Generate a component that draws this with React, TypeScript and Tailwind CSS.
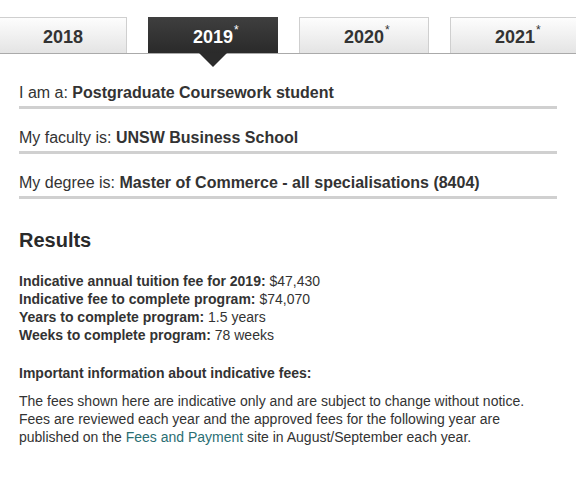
const tabs = [
  { year: '2018', star: false, active: false },
  { year: '2019', star: true, active: true },
  { year: '2020', star: true, active: false },
  { year: '2021', star: true, active: false },
];

const choices = [
  { label: 'I am a:', value: 'Postgraduate Coursework student' },
  { label: 'My faculty is:', value: 'UNSW Business School' },
  { label: 'My degree is:', value: 'Master of Commerce - all specialisations (8404)' },
];

const results = [
  { label: 'Indicative annual tuition fee for 2019:', value: '$47,430' },
  { label: 'Indicative fee to complete program:', value: '$74,070' },
  { label: 'Years to complete program:', value: '1.5 years' },
  { label: 'Weeks to complete program:', value: '78 weeks' },
];

function Label({ year, star }: { year: string; star: boolean }) {
  return (
    <span className="relative pt-[3px] text-[18px] font-bold leading-[22px]">
      {year}
      {star && <span className="absolute left-full top-[1px] ml-[1px] text-[12px] font-normal leading-none">*</span>}
    </span>
  );
}

function Tab({ year, star, active, first }: { year: string; star: boolean; active: boolean; first: boolean }) {
  if (active) {
    return (
      <div className="relative flex h-[36px] w-[130px] shrink-0 items-center justify-center bg-gradient-to-b from-[#3f3f3f] to-[#2a2a2a] text-white">
        <Label year={year} star={star} />
        <div className="absolute left-1/2 top-full -translate-x-1/2 border-x-[14px] border-t-[14px] border-x-transparent border-t-[#2b2b2b]" />
      </div>
    );
  }
  return (
    <div
      className={`flex h-[36px] shrink-0 items-center justify-center border border-b-0 border-[#cfcfcf] bg-gradient-to-b from-[#fdfdfd] to-[#e4e4e4] text-[#333] ${
        first ? 'w-[127px] border-l-0' : 'w-[130px]'
      }`}
    >
      <Label year={year} star={star} />
    </div>
  );
}

export default function App() {
  return (
    <div className="h-[487px] w-[576px] overflow-hidden bg-white font-['Liberation_Sans',Arial,sans-serif] text-[#333]">
      <div className="pt-[17px]">
        <div className="flex gap-[21px] border-b border-[#aaa]">
          {tabs.map((t, i) => (
            <Tab key={t.year} {...t} first={i === 0} />
          ))}
        </div>
      </div>

      <div className="px-[19px] pt-[29px]">
        <div className="flex w-[538px] flex-col gap-[19px]">
          {choices.map(c => (
            <div key={c.label} className="border-b-[3px] border-[#d0d0d0] pb-[3px] text-[16px] leading-[20px]">
              {c.label} <span className="font-bold">{c.value}</span>
            </div>
          ))}
        </div>

        <h2 className="mt-[29px] text-[20px] font-bold leading-[24px] text-[#2a2a2a]">Results</h2>

        <div className="mt-[20px] text-[14px] leading-[18px]">
          {results.map(r => (
            <div key={r.label}>
              <span className="font-bold">{r.label}</span> {r.value}
            </div>
          ))}
        </div>

        <div className="mt-[20px] text-[14px] font-bold leading-[18px]">Important information about indicative fees:</div>

        <p className="mt-[10px] text-[14px] leading-[18px]">
          The fees shown here are indicative only and are subject to change without notice.
          <br />
          Fees are reviewed each year and the approved fees for the following year are
          <br />
          published on the <span className="text-[#2a6e73]">Fees and Payment</span> site in August/September each year.
        </p>
      </div>
    </div>
  );
}
